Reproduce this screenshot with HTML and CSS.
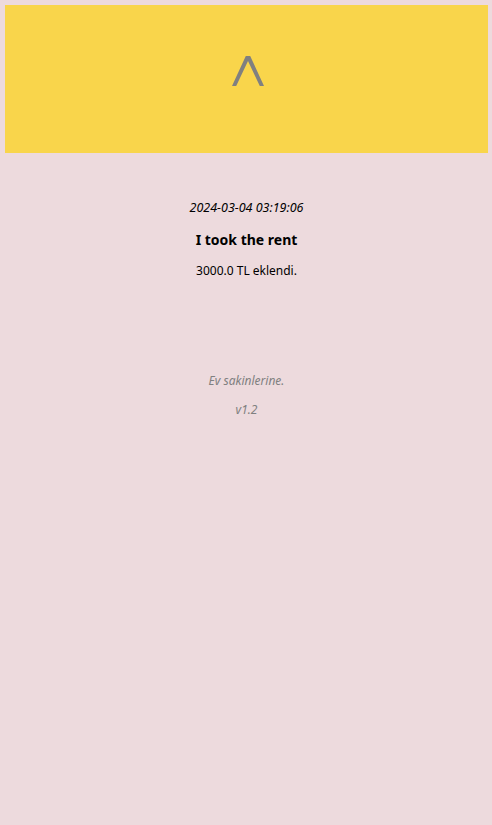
FILE: index.html
```html
<!DOCTYPE html>
<html>
<head>
<meta charset="utf-8">
<link rel="stylesheet" href="styles.css">
</head>
<body>
<div class="hero"><svg class="caret" width="32" height="30" viewBox="0 0 32 30"><polygon points="13.8,0 18.2,0 32,30 27.8,30 16,5 4.2,30 0,30" fill="#808080"/></svg></div>
<main class="entry">
  <p class="date">2024-03-04 03:19:06</p>
  <h1 class="title">I took the rent</h1>
  <p class="body">3000.0 TL eklendi.</p>
</main>
<footer class="footer">
  <p class="note">Ev sakinlerine.</p>
  <p class="note">v1.2</p>
</footer>
</body>
</html>
```
FILE: styles.css
```css
html, body {
  margin: 0;
  padding: 0;
}
body {
  background: #eddadd;
  font-family: "Noto Sans", sans-serif;
  color: #000;
  padding: 5px 4px 0 5px;
  min-height: 825px;
  box-sizing: border-box;
}
.hero {
  background: #f9d54b;
  height: 148px;
  display: flex;
  justify-content: center;
  align-items: flex-start;
}
.caret {
  display: block;
  margin-top: 51px;
  margin-left: 2px;
}
.entry {
  display: flex;
  flex-direction: column;
  align-items: center;
  padding-top: 46px;
}
.date {
  font-style: italic;
  font-size: 12.5px;
  margin: 0;
  line-height: 18px;
}
.title {
  font-size: 14px;
  font-weight: bold;
  margin: 13px 0 0;
  line-height: 20px;
}
.body {
  font-size: 12px;
  margin: 12px 0 0;
  line-height: 18px;
}
.footer {
  display: flex;
  flex-direction: column;
  align-items: center;
  padding-top: 92px;
}
.note {
  font-style: italic;
  font-size: 12px;
  color: #808080;
  margin: 0 0 11px;
  line-height: 18px;
}
```
